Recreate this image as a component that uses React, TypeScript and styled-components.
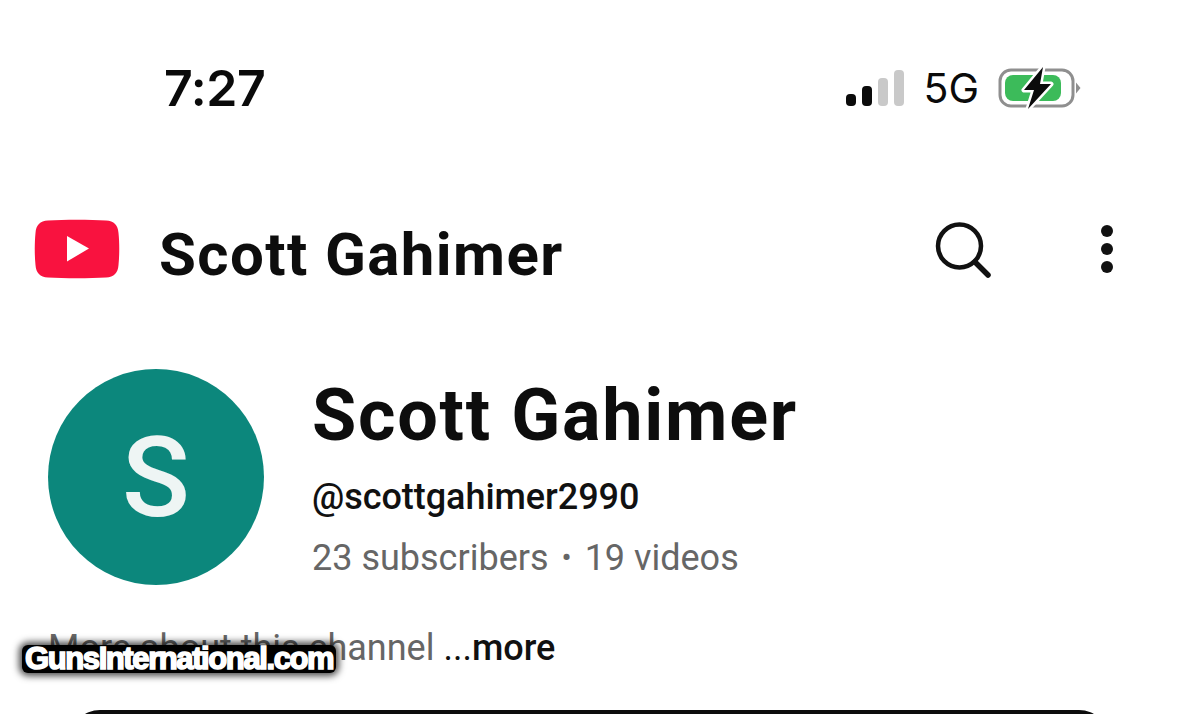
import React from "react";
import styled, { createGlobalStyle } from "styled-components";

const GlobalStyle = createGlobalStyle`
  html, body {
    margin: 0;
    padding: 0;
    background: #fff;
  }
  body {
    font-family: Roboto, "Liberation Sans", sans-serif;
    overflow: hidden;
  }
`;

const App = () => {
  return (
    <>
      <GlobalStyle />
      <Page>
        <StatusBar>
          <Time>7:27</Time>
          <StatusRight>
            <SignalIcon />
            <Network>5G</Network>
            <BatteryIcon />
          </StatusRight>
        </StatusBar>

        <TopBar>
          <TitleGroup>
            <YoutubeLogo />
            <TopTitle>Scott Gahimer</TopTitle>
          </TitleGroup>
          <TopActions>
            <SearchIcon />
            <DotsIcon />
          </TopActions>
        </TopBar>

        <ChannelHeader>
          <Avatar>S</Avatar>
          <ChannelInfo>
            <ChannelName>Scott Gahimer</ChannelName>
            <Handle>@scottgahimer2990</Handle>
            <Stats>
              23 subscribers<Dot>•</Dot>19 videos
            </Stats>
          </ChannelInfo>
        </ChannelHeader>

        <Description>
          More about this channel <More>...<b>more</b></More>
          <Watermark>GunsInternational.com</Watermark>
        </Description>

        <SubscribeButton />
      </Page>
    </>
  );
};
export default App;

const SignalIcon = () => (
  <svg width="58" height="36" viewBox="0 0 58 36">
    <rect x="0" y="24" width="10" height="12" rx="4" fill="#0b0b0b" />
    <rect x="16" y="16" width="10" height="20" rx="4" fill="#0b0b0b" />
    <rect x="32" y="8" width="10" height="28" rx="4" fill="#c9c9c9" />
    <rect x="48" y="0" width="10" height="36" rx="4" fill="#c9c9c9" />
  </svg>
);

const BatteryIcon = () => (
  <svg width="84" height="46" viewBox="0 0 84 46">
    <rect x="2" y="5" width="73" height="36" rx="11" fill="#fff" stroke="#8f8f8f" strokeWidth="3" />
    <rect x="7" y="10" width="56" height="26" rx="8" fill="#3cbb5a" />
    <path d="M78 17.5 L82.5 23 L78 28.5 Z" fill="#8f8f8f" />
    <path
      d="M45 2 L26 25 L36 25 L30 44 L53 19 L42 19 Z"
      fill="#0b0b0b"
      stroke="#fff"
      strokeWidth="5"
      strokeLinejoin="round"
      paintOrder="stroke"
    />
  </svg>
);

const YoutubeLogo = () => (
  <svg width="86" height="60" viewBox="0 0 86 60">
    <path
      d="M14 1.5 C30 0.5 56 0.5 72 1.5 C80 2 84 6 84.5 14 C85.5 24 85.5 36 84.5 46 C84 54 80 58 72 58.5 C56 59.5 30 59.5 14 58.5 C6 58 2 54 1.5 46 C0.5 36 0.5 24 1.5 14 C2 6 6 2 14 1.5 Z"
      fill="#f9123f"
    />
    <path d="M33 17 L55 29.5 L33 42.5 Z" fill="#fff" />
  </svg>
);

const SearchIcon = () => (
  <svg width="58" height="58" viewBox="0 0 58 58">
    <circle cx="25.5" cy="26" r="21.5" fill="none" stroke="#111" strokeWidth="4.5" />
    <path d="M41 42 L54 55" stroke="#111" strokeWidth="5.5" strokeLinecap="round" />
  </svg>
);

const DotsIcon = () => (
  <svg width="14" height="50" viewBox="0 0 14 50">
    <circle cx="7" cy="7" r="6" fill="#111" />
    <circle cx="7" cy="25" r="6" fill="#111" />
    <circle cx="7" cy="43" r="6" fill="#111" />
  </svg>
);

const Page = styled.div`
  width: 1179px;
  height: 714px;
  overflow: hidden;
  background: #fff;
  display: flex;
  flex-direction: column;
`;

const StatusBar = styled.div`
  display: flex;
  align-items: center;
  justify-content: space-between;
  height: 46px;
  margin-top: 65px;
  padding: 0 97px 0 164px;
`;

const Time = styled.div`
  font-family: Inter, sans-serif;
  font-size: 50px;
  font-weight: 600;
  letter-spacing: -0.4px;
  line-height: 46px;
  color: #0a0a0a;
`;

const StatusRight = styled.div`
  display: flex;
  align-items: center;
  gap: 19px;
`;

const Network = styled.div`
  font-family: Inter, sans-serif;
  font-size: 41px;
  font-weight: 400;
  line-height: 46px;
  color: #0a0a0a;
`;

const TopBar = styled.div`
  display: flex;
  align-items: center;
  justify-content: space-between;
  height: 60px;
  margin-top: 108px;
  padding: 0 65px 0 34px;
`;

const TitleGroup = styled.div`
  display: flex;
  align-items: center;
  gap: 39px;
`;

const TopTitle = styled.div`
  font-size: 60px;
  font-weight: 700;
  letter-spacing: 1.4px;
  color: #0d0d0d;
  line-height: 60px;
  padding-top: 11px;
`;

const TopActions = styled.div`
  display: flex;
  align-items: center;
  gap: 108px;
`;

const ChannelHeader = styled.div`
  display: flex;
  align-items: center;
  gap: 48px;
  margin-top: 90px;
  padding-left: 48px;
`;

const Avatar = styled.div`
  width: 216px;
  height: 216px;
  border-radius: 50%;
  background: #0c877c;
  color: #eef5f4;
  font-size: 112px;
  font-weight: 500;
  display: flex;
  align-items: center;
  justify-content: center;
`;

const ChannelInfo = styled.div`
  display: flex;
  flex-direction: column;
`;

const ChannelName = styled.div`
  font-size: 72px;
  font-weight: 700;
  letter-spacing: 1.7px;
  line-height: 84px;
  color: #0d0d0d;
`;

const Handle = styled.div`
  font-size: 36px;
  font-weight: 500;
  letter-spacing: -0.05px;
  line-height: 44px;
  color: #111;
  margin-top: 17px;
`;

const Stats = styled.div`
  font-size: 36px;
  line-height: 44px;
  color: #666;
  margin-top: 17px;
`;

const Dot = styled.span`
  font-size: 30px;
  margin: 0 13px;
  vertical-align: 2px;
`;

const Description = styled.div`
  position: relative;
  font-size: 36px;
  line-height: 44px;
  color: #666;
  margin-top: 41px;
  padding-left: 48px;
`;

const More = styled.span`
  color: #111;

  b {
    font-weight: 500;
  }
`;

const Watermark = styled.div`
  position: absolute;
  left: 22px;
  top: 19px;
  font-family: "Liberation Sans", sans-serif;
  font-size: 31px;
  font-weight: 700;
  line-height: 28px;
  letter-spacing: -1.4px;
  color: #fff;
  -webkit-text-stroke: 1.6px #fff;
  background: #000;
  border-radius: 6px;
  padding: 0 3px;
  box-shadow: 0 0 7px 3px rgba(0, 0, 0, 0.7);
`;

const SubscribeButton = styled.div`
  height: 60px;
  margin: 40px 70px 0;
  background: #0d0d0d;
  border-radius: 34px;
  flex-shrink: 0;
`;
